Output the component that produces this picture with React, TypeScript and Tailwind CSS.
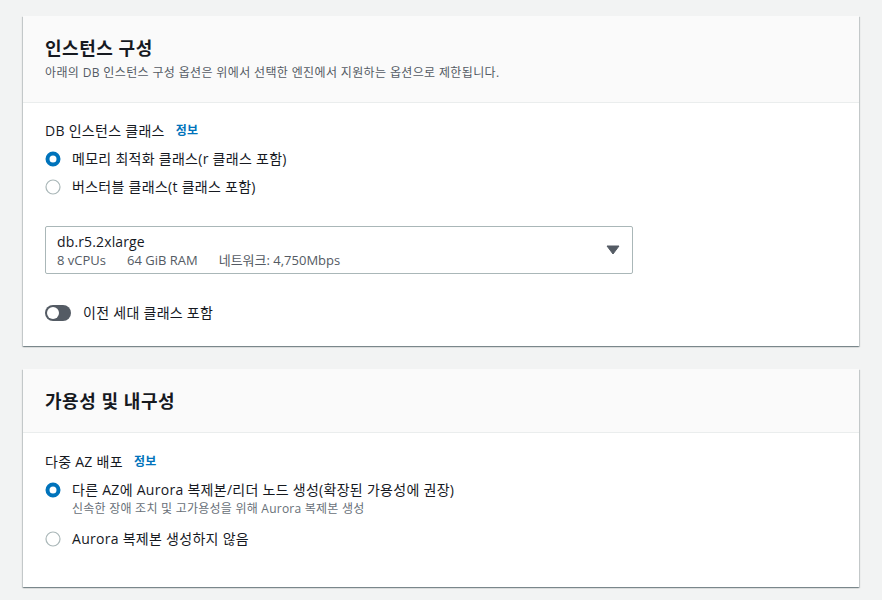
import type { ReactNode } from "react";

const font = "font-['Open_Sans','Noto_Sans_CJK_KR',sans-serif]";

function Radio({ checked }: { checked?: boolean }) {
  return (
    <svg width="16" height="16" viewBox="0 0 16 16" className="shrink-0">
      {checked ? (
        <circle cx="8" cy="8" r="5.5" fill="#fff" stroke="#0073bb" strokeWidth="4" />
      ) : (
        <circle cx="8" cy="8" r="7" fill="#fff" stroke="#aab7b8" strokeWidth="1.2" />
      )}
    </svg>
  );
}

function RadioRow({ checked, label, desc }: { checked?: boolean; label: string; desc?: string }) {
  return (
    <div className="flex items-start gap-[11px]">
      <div className="pt-[3px]">
        <Radio checked={checked} />
      </div>
      <div>
        <div className="text-[14px] leading-[22px] tracking-[0.02em] text-[#16191f]">{label}</div>
        {desc && <div className="text-[12px] leading-[16px] tracking-[0.02em] text-[#687078]">{desc}</div>}
      </div>
    </div>
  );
}

function Card({ title, desc, children }: { title: string; desc?: string; children: ReactNode }) {
  return (
    <div className="bg-white shadow-[0_1px_1px_0_rgba(0,28,36,0.3),1px_1px_1px_0_rgba(0,28,36,0.15),-1px_1px_1px_0_rgba(0,28,36,0.15)]">
      <div className={`border-b border-[#eaeded] bg-[#fafafa] px-[22px] pt-[20px] ${desc ? "pb-[21px]" : "pb-[19px]"}`}>
        <h2 className="text-[18px] font-bold leading-[24px] tracking-[0.03em] text-[#16191f]">{title}</h2>
        {desc && <p className="mt-[5px] text-[12px] leading-[16px] tracking-[0.03em] text-[#545b64]">{desc}</p>}
      </div>
      {children}
    </div>
  );
}

function Label({ text }: { text: string }) {
  return (
    <div className="flex items-center gap-[11px] text-[14px] leading-[22px] tracking-[0.02em] text-[#16191f]">
      <span>{text}</span>
      <span className="text-[12px] font-bold text-[#0073bb]">정보</span>
    </div>
  );
}

export default function App() {
  return (
    <div className={`${font} min-h-[600px] bg-[#f2f3f3] px-[23px] pt-4 pb-4`}>
      <div className="flex flex-col gap-[23px]">
        <Card
          title="인스턴스 구성"
          desc="아래의 DB 인스턴스 구성 옵션은 위에서 선택한 엔진에서 지원하는 옵션으로 제한됩니다."
        >
          <div className="px-[22px] pt-[17px] pb-[22px]">
            <Label text="DB 인스턴스 클래스" />
            <div className="mt-[6px] flex flex-col gap-[6px]">
              <RadioRow checked label="메모리 최적화 클래스(r 클래스 포함)" />
              <RadioRow label="버스터블 클래스(t 클래스 포함)" />
            </div>
            <div className="mt-[28px] flex h-[48px] w-[588px] items-center justify-between rounded-[2px] border border-[#aab7b8] pl-[11px] pr-[12px]">
              <div>
                <div className="text-[14px] leading-[20px] tracking-[0.01em] text-[#16191f]">db.r5.2xlarge</div>
                <div className="flex gap-[21px] text-[13px] leading-[16px] text-[#545b64]">
                  <span>8 vCPUs</span>
                  <span>64 GiB RAM</span>
                  <span>네트워크: 4,750Mbps</span>
                </div>
              </div>
              <svg width="14" height="10" viewBox="0 0 14 10">
                <path d="M1 1h12L7 9z" fill="#545b64" stroke="#545b64" strokeLinejoin="round" />
              </svg>
            </div>
            <div className="mt-[28px] flex items-center gap-[12px]">
              <div className="flex h-[16px] w-[26px] items-center rounded-full bg-[#545b64] px-[2px]">
                <div className="h-[12px] w-[12px] rounded-full bg-white" />
              </div>
              <span className="text-[14px] leading-[22px] tracking-[0.02em] text-[#16191f]">이전 세대 클래스 포함</span>
            </div>
          </div>
        </Card>
        <Card title="가용성 및 내구성">
          <div className="px-[22px] pt-[18px] pb-[37px]">
            <Label text="다중 AZ 배포" />
            <div className="mt-[6px] flex flex-col gap-[11px]">
              <RadioRow
                checked
                label="다른 AZ에 Aurora 복제본/리더 노드 생성(확장된 가용성에 권장)"
                desc="신속한 장애 조치 및 고가용성을 위해 Aurora 복제본 생성"
              />
              <RadioRow label="Aurora 복제본 생성하지 않음" />
            </div>
          </div>
        </Card>
      </div>
    </div>
  );
}
